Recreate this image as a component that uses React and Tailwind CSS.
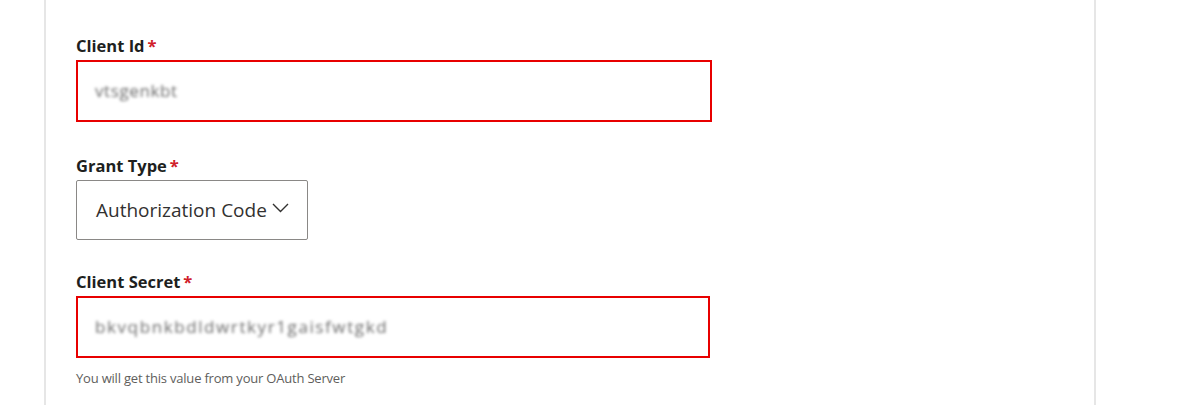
const font = { fontFamily: '"Open Sans", "Noto Sans", sans-serif' };

const Label = ({ children }) => (
  <label className="block h-[22px] text-[16.5px] font-bold leading-[22px] text-[#201f1e]">
    {children}
    <span className="ml-[3px] text-[#d0202a]">*</span>
  </label>
);

const MaskedInput = ({ value, width = "w-[636px]", spacing = "tracking-[0.6px]" }) => (
  <div className={`mt-[3px] flex h-[62px] ${width} items-center border-2 border-[#e80000] bg-white pl-[17px]`}>
    <span className={`select-none text-[17px] ${spacing} text-[#6a6a6a] blur-[1.4px]`}>{value}</span>
  </div>
);

const Chevron = () => (
  <svg className="ml-[5px] mt-[-4px]" width="17" height="10" viewBox="0 0 17 10" fill="none">
    <polyline points="1,1 8.5,8.5 16,1" stroke="#323130" strokeWidth="1.4" />
  </svg>
);

const App = () => {
  return (
    <div className="h-[405px] w-full overflow-hidden bg-white" style={font}>
      <div className="ml-[44px] h-full w-[1052px] border-x-2 border-[#e6e6e6] pl-[30px] pt-[35px]">
        <Label>Client Id</Label>
        <MaskedInput value="vtsgenkbt" />

        <div className="mt-[33px]">
          <Label>Grant Type</Label>
          <button className="mt-[3px] flex h-[60px] w-[232px] items-center rounded-[2px] border border-[#8a8886] bg-white pl-[19px] text-[19px] text-[#323130]">
            <span>Authorization Code</span>
            <Chevron />
          </button>
        </div>

        <div className="mt-[31px]">
          <Label>Client Secret</Label>
          <MaskedInput value="bkvqbnkbdldwrtkyr1gaisfwtgkd" width="w-[634px]" spacing="tracking-[1.6px]" />
          <p className="mt-[10px] text-[13px] leading-[20px] tracking-[-0.2px] text-[#605e5c]">
            You will get this value from your OAuth Server
          </p>
        </div>
      </div>
    </div>
  );
};

export default App;
